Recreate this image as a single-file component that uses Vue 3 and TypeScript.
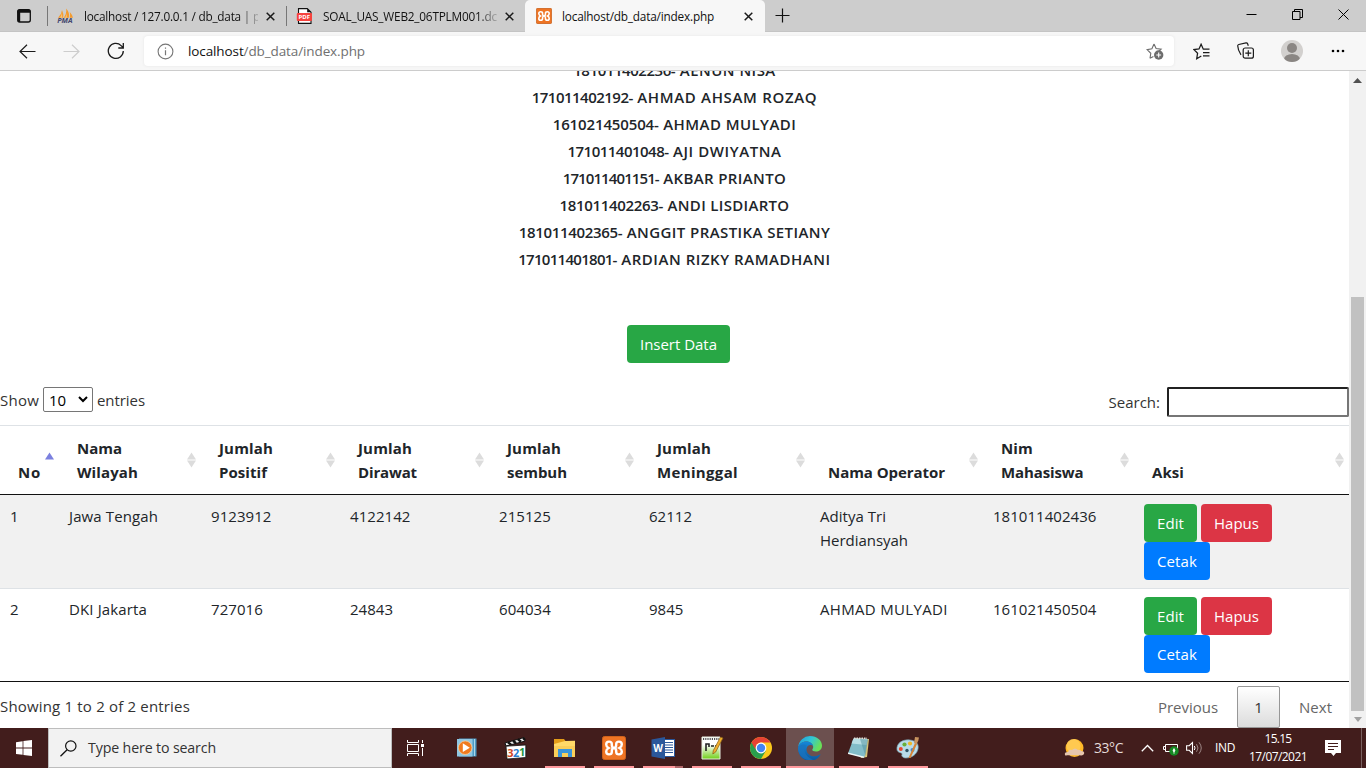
<script setup lang="ts">
import type { Directive } from 'vue'

interface Student { nim: string; nimWidth: number; name: string; nameWidth: number }
interface Column { lines: [string, number][]; width: number; asc?: boolean }
interface Cell { lines: [string, number][] }

// Tracks a single-line label so that it occupies the given advance width.
const vFit: Directive<HTMLElement, number> = {
  mounted(el, binding) {
    const count = (el.textContent ?? '').trim().length
    if (!count) return
    el.style.letterSpacing = '0px'
    const natural = el.getBoundingClientRect().width
    el.style.letterSpacing = `${((binding.value - natural) / count).toFixed(3)}px`
  },
}

const students: Student[] = [
  { nim: '181011402236-', nimWidth: 102, name: 'AENUN NISA', nameWidth: 96 },
  { nim: '171011402192-', nimWidth: 101, name: 'AHMAD AHSAM ROZAQ', nameWidth: 180 },
  { nim: '161021450504-', nimWidth: 106, name: 'AHMAD MULYADI', nameWidth: 133 },
  { nim: '171011401048-', nimWidth: 101, name: 'AJI DWIYATNA', nameWidth: 108.5 },
  { nim: '171011401151-', nimWidth: 96, name: 'AKBAR PRIANTO', nameWidth: 123 },
  { nim: '181011402263-', nimWidth: 103.5, name: 'ANDI LISDIARTO', nameWidth: 122 },
  { nim: '181011402365-', nimWidth: 103.5, name: 'ANGGIT PRASTIKA SETIANY', nameWidth: 203.5 },
  { nim: '171011401801-', nimWidth: 98.5, name: 'ARDIAN RIZKY RAMADHANI', nameWidth: 209.5 },
]

const columns: Column[] = [
  { lines: [['No', 23]], width: 59, asc: true },
  { lines: [['Nama', 45], ['Wilayah', 61]], width: 142 },
  { lines: [['Jumlah', 54], ['Positif', 48]], width: 139 },
  { lines: [['Jumlah', 54], ['Dirawat', 59]], width: 149 },
  { lines: [['Jumlah', 54], ['sembuh', 60]], width: 150 },
  { lines: [['Jumlah', 54], ['Meninggal', 81]], width: 171 },
  { lines: [['Nama Operator', 117]], width: 173 },
  { lines: [['Nim', 32], ['Mahasiswa', 82.5]], width: 151 },
  { lines: [['Aksi', 32]], width: 215 },
]

const rows: Cell[][] = [
  [
    { lines: [['1', 8.6]] },
    { lines: [['Jawa Tengah', 89]] },
    { lines: [['9123912', 60.4]] },
    { lines: [['4122142', 60.4]] },
    { lines: [['215125', 51.8]] },
    { lines: [['62112', 43.1]] },
    { lines: [['Aditya Tri', 66], ['Herdiansyah', 88]] },
    { lines: [['181011402436', 103.5]] },
  ],
  [
    { lines: [['2', 8.6]] },
    { lines: [['DKI Jakarta', 78]] },
    { lines: [['727016', 51.8]] },
    { lines: [['24843', 43.1]] },
    { lines: [['604034', 51.8]] },
    { lines: [['9845', 34.5]] },
    { lines: [['AHMAD MULYADI', 127.8]] },
    { lines: [['161021450504', 103.5]] },
  ],
]
</script>

<template>
  <div class="screen">
    <header class="tabs">
      <div class="tab-actions">
        <svg width="16" height="16" viewBox="0 0 16 16"><rect x="1.7" y="1.7" width="12.6" height="12.3" rx="2" fill="none" stroke="#111" stroke-width="1.3" /><path d="M1.5 3.2Q1.5 1.5 3.2 1.5H12.8Q14.5 1.5 14.5 3.2V4.8H1.5ZM2 4.5h2.2v9.500H2z" fill="#111" /></svg>
      </div>
      <div class="tab">
        <svg class="fav" width="17" height="16" viewBox="0 0 17 16"><path d="M1 9.8Q4.8 6 5 2Q7 6 6.2 9.8ZM6.6 9.8Q9.8 6 9.2 0.5Q13 5 12 9.8ZM12.7 9.8Q13.5 7 12.8 4Q15.5 7 16 9.8Z" fill="#f49b2e" /><path d="M3 9.8Q5.3 7 5 2L5.2 9.8ZM8 9.8Q10.5 6 9.2 .5L10 9.8Z" fill="#f9c275" /><text x="0.2" y="15.2" font-family="Open Sans, sans-serif" font-size="6.4" font-weight="700" font-style="italic" fill="#44486f" textLength="15.4" lengthAdjust="spacingAndGlyphs">PMA</text></svg>
        <div class="title fade"><span v-fit="166">localhost / 127.0.0.1 / db_data |</span><span>&nbsp;p</span></div>
        <svg class="x" width="9" height="9" viewBox="0 0 9 9"><path d="M.7.7l7.6 7.6M8.3.7L.7 8.3" stroke="#1a1a1a" stroke-width="1.5" /></svg>
      </div>
      <div class="tab">
        <svg class="fav" width="17" height="16" viewBox="0 0 17 16"><path d="M2.5 15.4V.6H11.3L15 4.2V15.4Z" fill="#fff" stroke="#111" stroke-width="1.1" /><path d="M11.2.5V4.3H15Z" fill="#111" /><rect x="0.8" y="5" width="15.2" height="8" rx="1" fill="#f6433e" /><text x="2.6" y="11.2" font-family="Open Sans, sans-serif" font-size="6" font-weight="700" fill="#fff" textLength="11.500">PDF</text></svg>
        <div class="title fade"><span v-fit="174">SOAL_UAS_WEB2_06TPLM001.dc</span></div>
        <svg class="x" width="9" height="9" viewBox="0 0 9 9"><path d="M.7.7l7.6 7.6M8.3.7L.7 8.3" stroke="#1a1a1a" stroke-width="1.5" /></svg>
      </div>
      <div class="tab active">
        <svg class="fav" width="16" height="16" viewBox="0 0 24 24"><rect x=".5" y=".5" width="23" height="23" rx="2" fill="#ee7424" stroke="#bd5411" /><path d="M9.800 9.500V8Q9.800 5.600 7 5.600Q4.200 5.600 4.200 8.400Q4.200 10.700 6.600 12Q4.200 13.300 4.200 15.600Q4.200 18.400 7 18.400Q9.800 18.400 9.800 16V14.500M14.200 9.500V8Q14.200 5.600 17 5.600Q19.800 5.600 19.800 8.400Q19.800 10.700 17.400 12Q19.800 13.300 19.800 15.600Q19.800 18.400 17 18.400Q14.200 18.400 14.200 16V14.500M9.800 9.200Q10 12 12 12T14.200 14.800M14.200 9.200Q14 12 12 12T9.800 14.800" fill="none" stroke="#fff" stroke-width="2.400" /></svg>
        <div class="title"><span v-fit="152">localhost/db_data/index.php</span></div>
        <svg class="x" width="9" height="9" viewBox="0 0 9 9"><path d="M.7.7l7.6 7.6M8.3.7L.7 8.3" stroke="#1a1a1a" stroke-width="1.5" /></svg>
      </div>
      <svg class="plus" width="15" height="15" viewBox="0 0 15 15"><path d="M7.5.5v14M.5 7.5h14" stroke="#111" stroke-width="1.2" /></svg>
      <div class="window-controls">
        <svg width="11" height="11" viewBox="0 0 11 11"><path d="M.5 5.5h10" stroke="#000" /></svg>
        <svg width="11" height="11" viewBox="0 0 11 11"><path d="M.5 2.5h7.5v8H.5zM2.5 2.5v-2h8v8H8" fill="none" stroke="#000" /></svg>
        <svg width="11" height="11" viewBox="0 0 11 11"><path d="M.5.5l10 10M10.5.5l-10 10" stroke="#000" /></svg>
      </div>
    </header>

    <nav class="toolbar">
      <div class="nav-icons">
        <svg width="17" height="15" viewBox="0 0 17 15"><path d="M16.5 7.5H1.2M8 .8L1 7.5l7 6.7" fill="none" stroke="#1b1b1b" stroke-width="1.2" /></svg>
        <svg width="17" height="15" viewBox="0 0 17 15"><path d="M.5 7.5h15.3M9 .8l7 6.7-7 6.7" fill="none" stroke="#cdcdcd" stroke-width="1.2" /></svg>
        <svg width="18" height="18" viewBox="0 0 18 18"><path d="M16.3 9a7.5 7.5 0 1 1-2.2-5.4l2 2M16.3 1v5h-5" fill="none" stroke="#1b1b1b" stroke-width="1.3" /></svg>
      </div>
      <div class="address">
        <svg width="17" height="17" viewBox="0 0 17 17"><circle cx="8.5" cy="8.5" r="7.4" fill="none" stroke="#777" stroke-width="1.1" /><path d="M8.5 7.3v5M8.5 4.4v1.4" stroke="#777" stroke-width="1.2" /></svg>
        <div class="url" v-fit="177"><b>localhost</b>/db_data/index.php</div>
        <svg class="fav-add" width="18" height="17" viewBox="0 0 18 17"><path d="M8 1l2.1 4.6 5 .6-3.2 3M4 15.3l.8-5L1.1 6.6l4.8-.9L8 1M4 15.3l3.4-1.8" fill="none" stroke="#6d6d6d" stroke-width="1.1" /><circle cx="12.7" cy="12" r="4.7" fill="#6d6d6d" /><path d="M12.7 9.6v4.8M10.3 12h4.8" stroke="#fff" stroke-width="1.1" /></svg>
      </div>
      <div class="tools">
        <svg width="18" height="17" viewBox="0 0 18 17"><path d="M16.5 6.2H10.3L8.1 1.2 6 5.9l-5 .7 3.6 3.6-.9 5.5 4.6-2.7M10 9.5h6.5M10 12.8h6.5" fill="none" stroke="#1b1b1b" stroke-width="1.25" /></svg>
        <svg width="18" height="18" viewBox="0 0 18 18"><rect x="6.2" y="6" width="10.2" height="10.2" rx="2" fill="none" stroke="#1b1b1b" stroke-width="1.2" /><path d="M11.3 8.2v6M8.3 11.2h6M4 12.8C1.3 9 .8 6.2.7 3.8Q.7 2.8 1.8 2.5L9 .9Q10.2.7 10.6 1.7L11.3 3.8" fill="none" stroke="#1b1b1b" stroke-width="1.2" /></svg>
        <svg width="22" height="22" viewBox="0 0 22 22"><defs><clipPath id="avatar"><circle cx="11" cy="11" r="11" /></clipPath></defs><g clip-path="url(#avatar)"><rect width="22" height="22" fill="#d2d0ce" /><circle cx="11" cy="8" r="5" fill="#8a8683" /><ellipse cx="11" cy="19.5" rx="8" ry="5.5" fill="#8a8683" /></g></svg>
        <svg width="14" height="4" viewBox="0 0 14 4"><circle cx="2" cy="2" r="1.3" /><circle cx="7" cy="2" r="1.3" /><circle cx="12" cy="2" r="1.3" /></svg>
      </div>
    </nav>

    <div class="viewport">
      <main class="page">
        <ul class="students">
          <li v-for="s in students" :key="s.nim"><span v-fit="s.nimWidth">{{ s.nim }}</span> <span v-fit="s.nameWidth">{{ s.name }}</span></li>
        </ul>
        <div class="insert"><button class="btn green"><span v-fit="77">Insert Data</span></button></div>

        <div class="controls">
          <label class="length">
            <span v-fit="39">Show</span>
            <span class="select"><span v-fit="17">10</span><svg width="10" height="7" viewBox="0 0 10 7"><path d="M1 1l4 4 4-4" fill="none" stroke="#000" stroke-width="2" /></svg></span>
            <span v-fit="48">entries</span>
          </label>
          <label class="filter"><span v-fit="51.5">Search:</span><input type="text" /></label>
        </div>

        <table>
          <colgroup><col v-for="(c, i) in columns" :key="i" :style="{ width: c.width + 'px' }" /></colgroup>
          <thead>
            <tr>
              <th v-for="(c, i) in columns" :key="i">
                <div class="head">
                  <div><div v-for="(l, j) in c.lines" :key="j" class="line"><span v-fit="l[1]">{{ l[0] }}</span></div></div>
                  <svg class="sort" width="9" height="16" viewBox="0 0 9 16">
                    <path d="M4.5 0.5L9 7.5H0Z" :fill="c.asc ? '#7b80df' : '#dcdcdc'" />
                    <path v-if="!c.asc" d="M4.5 15.5L0 8.5H9Z" fill="#dcdcdc" />
                  </svg>
                </div>
              </th>
            </tr>
          </thead>
          <tbody>
            <tr v-for="(r, i) in rows" :key="i">
              <td v-for="(c, j) in r" :key="j">
                <div v-for="(l, k) in c.lines" :key="k" class="line"><span v-fit="l[1]">{{ l[0] }}</span></div>
              </td>
              <td>
                <div class="actions">
                  <button class="btn green"><span v-fit="27">Edit</span></button>
                  <button class="btn red"><span v-fit="45">Hapus</span></button>
                  <button class="btn blue"><span v-fit="40">Cetak</span></button>
                </div>
              </td>
            </tr>
          </tbody>
        </table>

        <footer class="foot">
          <span class="info" v-fit="190">Showing 1 to 2 of 2 entries</span>
          <div class="pager">
            <a><span v-fit="60">Previous</span></a><a class="current">1</a><a><span v-fit="33">Next</span></a>
          </div>
        </footer>
      </main>
      <aside class="scrollbar">
        <svg width="9" height="5" viewBox="0 0 9 5"><path d="M4.5 0L9 5H0Z" fill="#505050" /></svg>
        <div class="thumb"></div>
        <svg width="8" height="5" viewBox="0 0 8 5"><path d="M4 5L0 0H8Z" fill="#a0a0a0" /></svg>
      </aside>
    </div>

    <div class="taskbar">
      <div class="start"><svg width="16" height="16" viewBox="0 0 16 16"><path d="M0 2.2L6.6 1.2V7.5H0ZM7.4 1.1L16 0V7.5H7.4ZM0 8.4H6.6V14.8L0 13.9ZM7.4 8.4H16V16L7.4 14.9Z" fill="#fff" /></svg></div>
      <div class="searchbox">
        <svg width="17" height="17" viewBox="0 0 17 17"><circle cx="10.8" cy="6" r="5.2" fill="none" stroke="#111" stroke-width="1.2" /><path d="M7.1 9.7L.5 16.3" stroke="#111" stroke-width="1.3" /></svg>
        <span v-fit="128">Type here to search</span>
      </div>
      <div class="apps">
        <div class="app task-view"><svg width="18" height="16" viewBox="0 0 18 16"><path d="M.5 0v2.500h11V0M.5 16v-2.500h11V16M.5 4.500h11v7H.5zM15.500 0v3M15.500 8v8" fill="none" stroke="#fff" /><rect x="14" y="4" width="3" height="3" fill="#fff" /></svg></div>
        <div class="app"><svg width="22" height="22" viewBox="0 0 22 22"><path d="M3 1.5h17.5v18H3z" fill="#4e9bc4" /><path d="M1 2h15.5v17.5H1z" fill="#8fc7e3" /><path d="M18.5 2v17" stroke="#a9d7ea" /><circle cx="9.2" cy="10.7" r="6.8" fill="#f07a1e" stroke="#fbd0a0" stroke-width=".8" /><path d="M6.8 6.3v8.8l7-4.4z" fill="#fff" /></svg></div>
        <div class="app"><svg width="24" height="24" viewBox="0 0 24 24"><path d="M1 7L20 1.5l1 3.6L2 10z" fill="#eee" stroke="#111" stroke-width="1" /><path d="M4 6.2l3 2.4M9 4.8l3 2.4M14 3.3l3 2.4M19 2l2 2" stroke="#111" stroke-width="2.4" /><path d="M2 10.200L21.8 9v12.5L3 23z" fill="#fff" stroke="#111" stroke-width=".8" /><g font-family="Open Sans, sans-serif" font-size="11" font-weight="700"><text x="3.2" y="20.8" fill="#d24824">3</text><text x="9.1" y="20.6" fill="#287fd0">2</text><text x="15" y="20.3" fill="#249641">1</text></g></svg></div>
        <div class="app open"><svg width="24" height="22" viewBox="0 0 24 22"><path d="M1 2h10l1.5 2H22v15H1z" fill="#e39d19" /><path d="M1 7l11-3 10-.2V20H1z" fill="#ffd968" /><path d="M1 9h21v11H1z" fill="#f9ce59" /><path d="M5 20v-8h14v8h-4v-4H9v4z" fill="#3a95da" /></svg></div>
        <div class="app open"><svg width="24" height="24" viewBox="0 0 24 24"><rect x=".5" y=".5" width="23" height="23" rx="2" fill="#ee7424" stroke="#cf621b" /><path d="M9.800 9.500V8Q9.800 5.600 7 5.600Q4.200 5.600 4.200 8.400Q4.200 10.700 6.600 12Q4.200 13.300 4.200 15.600Q4.200 18.400 7 18.400Q9.800 18.400 9.800 16V14.500M14.200 9.500V8Q14.200 5.600 17 5.600Q19.800 5.600 19.800 8.400Q19.800 10.700 17.400 12Q19.800 13.300 19.800 15.600Q19.800 18.400 17 18.400Q14.200 18.400 14.200 16V14.500M9.800 9.200Q10 12 12 12T14.200 14.800M14.200 9.200Q14 12 12 12T9.800 14.800" fill="none" stroke="#fff" stroke-width="2.400" /></svg></div>
        <div class="app open grouped"><svg width="24" height="22" viewBox="0 0 24 22"><rect x="12" y="2.5" width="11.5" height="17" fill="#fff" stroke="#2b579a" /><path d="M14 5.5h8M14 8h8M14 10.5h8M14 13h8M14 15.5h8" stroke="#2b579a" stroke-width="1.1" /><path d="M.5 2.5L14 0v22L.5 19.5z" fill="#2b579a" /><text x="2.2" y="15" font-family="Open Sans, sans-serif" font-size="10" font-weight="700" fill="#fff">W</text></svg></div>
        <div class="app open"><svg width="24" height="24" viewBox="0 0 24 24"><defs><linearGradient id="npp" x2="0" y2="1"><stop offset=".35" stop-color="#fff" /><stop offset="1" stop-color="#70cf18" /></linearGradient></defs><path d="M2 1h18v22H2z" fill="url(#npp)" stroke="#e8efe0" /><path d="M3 3h16" stroke="#555" stroke-width="2" stroke-dasharray="1.2 1" /><path d="M6 15V8h3v3M11 10h3M15 10h2" fill="none" stroke="#222" stroke-width="1.6" /><path d="M20.5 1l2.5 1-7.3 14-2.9 2 .5-3.5z" fill="#f1ae2c" stroke="#815b19" stroke-width=".7" /></svg></div>
        <div class="app open"><svg width="22" height="22" viewBox="0 0 22 22"><circle cx="11" cy="11" r="11" fill="#fbc91c" /><path d="M1.500 5.500A11 11 0 0 0 11 22l4.800-8.200L11 11z" fill="#299f4d" /><path d="M1.500 5.500A11 11 0 0 1 20.500 5.500H11A5.500 5.500 0 0 0 6.200 8.300L5.500 12.400z" fill="#e64234" /><circle cx="11" cy="11" r="5.400" fill="#fff" /><circle cx="11" cy="11" r="4.200" fill="#4285f4" /></svg></div>
        <div class="app open active"><svg width="24" height="24" viewBox="0 0 24 24"><defs><linearGradient id="eg" x1="0" x2="1" y2=".4"><stop stop-color="#209bd9" /><stop offset=".55" stop-color="#31c6d7" /><stop offset="1" stop-color="#69df58" /></linearGradient><linearGradient id="eb" x2="0" y2="1"><stop stop-color="#1588d8" /><stop offset="1" stop-color="#0c579e" /></linearGradient></defs><path d="M.2 11A12 12 0 0 1 12 0c7 0 12 4.5 12 9.5 0 4-3 6-6.1 6-2.3 0-3.6-.8-3.6-1.7 0-.7.9-1.1.9-2.8C15.200 8 12 5.500 8.500 5.500 4 5.500 1.200 8 .2 11z" fill="url(#eg)" /><path d="M.1 12C.5 8 4 5.500 8.500 5.500c3.300 0 6.200 2 6.600 4.500-.7-1-1.900-1.200-3.100-1-3 .5-4 3.500-3.300 6 .9 3.500 4.500 5.800 8.300 5.300 2-.2 3.700-1 4.900-1.700.5-.2.700.1.500.5A12 12 0 0 1 .1 12z" fill="url(#eb)" /><path d="M8.700 9.500C6.500 11 5.700 15 8 18.500c1.800 2.700 4.500 4.300 7 5C7 26 .1 19.500.1 12 1.500 9 5.500 7.500 8.700 9.500z" fill="#1b73bd" opacity=".7" /></svg></div>
        <div class="app open"><svg width="24" height="24" viewBox="0 0 24 24"><path d="M7 2L22 3l-2 18-6 1z" fill="#d8c47a" /><path d="M6.500 2.500L20.500 3 17.500 21.500 1 17.500z" fill="#82bdc9" /><path d="M6.500 2.500L20.500 3l-1 6-15-1.500z" fill="#b9dfe5" /><path d="M1 16.500l16 4-.3 1.500L1 18z" fill="#eef7f8" /><path d="M13 3l5.500 17L21 3.500z" fill="#4f919e" opacity=".5" /><path d="M7 2.300h13" stroke="#ddd" stroke-dasharray="1.500 1" stroke-width="1.500" /></svg></div>
        <div class="app open"><svg width="24" height="24" viewBox="0 0 24 24"><path d="M1 14C0 7 7 3 14 4c7 .8 9 5 8 9-1 5-6 9-12 9-3 0-5-2-4-3.500C6.500 16 2 17.500 1 14z" fill="#b9dcea" stroke="#779dac" stroke-width=".7" /><circle cx="4.800" cy="13" r="2" fill="#e84730" /><circle cx="8.500" cy="8.500" r="2.100" fill="#68af3a" /><circle cx="14" cy="7.500" r="2.100" fill="#eeb629" /><circle cx="11" cy="14.500" r="1.700" fill="#2d5365" /><circle cx="16.500" cy="14" r="2" fill="#4285ce" /><path d="M12.500 22L19 7l2 1-6.500 14z" fill="#d68437" /><path d="M18 7L19 1l4 .5-.7 3L20.500 8.500z" fill="#c8935f" /></svg></div>
      </div>
      <div class="tray">
        <svg class="weather" width="21" height="21" viewBox="0 0 21 21"><circle cx="10.500" cy="10" r="9" fill="#ffb927" /><circle cx="9.500" cy="8" r="7" fill="#ffd062" opacity=".7" /><path d="M1 17Q0 14 4 14 5 11 8 12q3-3 6 0 2-1 3 1 4 0 3 3-1 2-4 1.300H3Q1.500 18 1 17z" fill="#e6c6ad" /></svg>
        <span class="temp" v-fit="29">33°C</span>
        <svg class="chev" width="13" height="8" viewBox="0 0 13 8"><path d="M.8 7.200L6.500 1.500l5.700 5.700" fill="none" stroke="#fff" stroke-width="1.300" /></svg>
        <svg class="battery" width="17" height="13" viewBox="0 0 17 13"><path d="M2.500 1.500h12v7h-12zM2.500 3.500h-2v3h2" fill="none" stroke="#fff" /><circle cx="11" cy="8" r="4.700" fill="#158923" /><path d="M11 5.500q2 2 0 3.800-2-1.800 0-3.800zM11 9v2" fill="#fff" stroke="#fff" stroke-width=".6" /></svg>
        <svg class="sound" width="17" height="14" viewBox="0 0 17 14"><path d="M.6 4.700h2.600l3.300-3.200v11L3.200 9.300H.6z" fill="none" stroke="#fff" stroke-width="1.100" /><path d="M8.300 5q1.500 2 0 4" fill="none" stroke="#fff" /><path d="M10.500 3.200q3 3.800 0 7.600M13 1.300q4.500 5.700 0 11.400" fill="none" stroke="#9d8786" /></svg>
        <span class="lang" v-fit="20">IND</span>
        <div class="clock"><span v-fit="27">15.15</span><span v-fit="58">17/07/2021</span></div>
        <svg class="notice" width="16" height="16" viewBox="0 0 16 16"><path d="M0 0h16v13h-5l-2.500 3-2.500-3H0z" fill="#fff" /><path d="M3 3.500h10M3 6.500h10M3 9.500h6" stroke="#431c1b" /></svg>
        <div class="peek"></div>
      </div>
    </div>
  </div>
</template>

<style>
html, body { overflow: hidden; background: #fff; }
</style>

<style scoped>
* { box-sizing: border-box; }
.screen { display: flex; flex-direction: column; width: 1366px; height: 768px; overflow: hidden; font: 400 15px/24px "Open Sans", "Noto Sans", sans-serif; color: #212529; white-space: nowrap; }
.screen span { display: inline-block; }
.screen svg { display: block; flex: none; }
.tabs { flex: none; display: flex; height: 32px; background: #cdcdcd; border-bottom: 1px solid #c4c4c4; font-size: 11.8px; line-height: 16px; color: #222; }
.tab-actions { width: 47px; padding: 8px 0 0 16px; }
.tab { position: relative; display: flex; align-items: center; width: 239px; height: 32px; padding: 0 11px 0 10px; }
.tab::before { content: ""; position: absolute; left: 0; top: 6px; width: 1px; height: 20px; background: #777; }
.tab.active { width: 240px; padding: 0 12px 0 11px; background: #f7f7f7; border-radius: 5px 5px 0 0; }
.tab.active::before { display: none; }
.tab .title { flex: 1; height: 16px; margin-left: 10px; overflow: hidden; color: #111; }
.tab .title.fade { flex: none; width: 174px; -webkit-mask-image: linear-gradient(90deg, #000 155px, transparent 178px); mask-image: linear-gradient(90deg, #000 155px, transparent 178px); }
.tab .x { margin-left: auto; }
.plus { margin: 8px 0 0 10px; }
.window-controls { display: flex; gap: 35px; margin-left: auto; padding: 9px 17px 0 0; }
.toolbar { flex: none; display: flex; align-items: center; height: 39px; background: #f7f7f7; border-bottom: 1px solid #ccc; }
.nav-icons { display: flex; align-items: center; gap: 27px; width: 144px; padding-left: 19px; }
.address { display: flex; align-items: center; width: 1030px; height: 30px; padding: 0 10px 0 13px; background: #fff; border-radius: 4px; box-shadow: 0 0 3px #e4e4e4; }
.url { margin-left: 14px; font-size: 13.5px; line-height: 20px; color: #707070; }
.url b { font-weight: 400; color: #111; }
.fav-add { margin-left: auto; }
.tools { display: flex; align-items: center; margin-left: 19px; }
.tools svg:nth-child(2) { margin-left: 26px; }
.tools svg:nth-child(3) { margin-left: 26px; }
.tools svg:nth-child(4) { margin-left: 28px; }
.viewport { flex: none; display: flex; height: 657px; background: #fff; }
.page { width: 1349px; height: 657px; overflow: hidden; }
.students { margin: -13px 0 0; padding: 0; height: 267px; list-style: none; font-weight: 600; font-size: 15px; }
.students li { display: flex; justify-content: center; gap: 4.500px; height: 27px; line-height: 25px; }
.insert { display: flex; justify-content: center; margin-left: 8px; }
.btn { height: 38px; padding: 0 13px; border: 0; border-radius: 4px; color: #fff; font: inherit; line-height: 38px; text-align: left; white-space: nowrap; }
.green { background: #28a745; }
.red { background: #dc3545; }
.blue { background: #007bff; }
.controls { display: flex; justify-content: space-between; align-items: flex-start; height: 62px; padding-top: 24px; color: #333; }
.length { display: flex; gap: 4px; align-items: center; height: 25px; }
.screen .select { display: flex; align-items: center; justify-content: space-between; width: 50px; height: 25px; padding: 0 4px 0 5px; border: 1px solid #767676; border-radius: 2px; color: #000; }
.filter { display: flex; align-items: center; gap: 7px; }
.filter input { width: 182px; height: 30px; border: 2px inset #767676; border-radius: 2px; background: #fff; }
table { width: 1349px; table-layout: fixed; border-collapse: separate; border-spacing: 0; border-top: 1px solid #dee2e6; border-bottom: 1px solid #111; }
th { height: 69px; padding: 9px 8px 10px 18px; border-bottom: 1px solid #111; vertical-align: bottom; text-align: left; font-weight: 700; }
.head { position: relative; display: flex; align-items: flex-end; height: 48px; }
.sort { position: absolute; right: -3px; top: 16px; }
.line { height: 24px; }
td { height: 93px; padding: 8px 10px; border-top: 1px solid #dee2e6; vertical-align: top; }
tbody tr:first-child td { background: #f1f1f1; border-top-color: #f1f1f1; }
.actions { display: flex; flex-wrap: wrap; column-gap: 4px; width: 130px; height: 76px; }
.foot { display: flex; justify-content: space-between; height: 46px; color: #333; }
.info { padding-top: 12px; }
.pager { display: flex; padding-top: 4px; color: #666; }
.pager a { height: 42px; padding: 9px 17px 0 18px; }
.pager .current { width: 43px; margin: 0 1px 0 2px; padding: 8px 0 0; border: 1px solid #979797; border-radius: 2px; text-align: center; color: #333; background: linear-gradient(#fff, #dcdcdc); }
.scrollbar { display: flex; flex-direction: column; align-items: center; width: 17px; height: 657px; padding: 7px 0 6px; background: #f1f1f1; }
.thumb { width: 13px; height: 414px; margin: 214px 0 auto; background: #c1c1c1; }
.taskbar { flex: none; display: flex; height: 40px; background: #421d1c; color: #fff; }
.start { display: flex; align-items: center; width: 48px; padding-left: 16px; }
.searchbox { display: flex; align-items: center; gap: 11px; width: 344px; padding-left: 11px; background: #f2f2f2; border: 1px solid #bdbdbd; color: #333; font-size: 14.2px; }
.apps { display: flex; gap: 1px; }
.app { position: relative; display: flex; align-items: center; justify-content: center; width: 48px; height: 40px; }
.task-view { margin-right: 2px; }
.app.open::after { content: ""; position: absolute; left: 4px; right: 4px; bottom: 0; height: 2px; background: #ff999d; }
.app.grouped::after { background: linear-gradient(90deg, #ff999d 32px, #b0686b 32px); }
.app.active { background: #6c504f; }
.app.active::after { left: 0; right: 0; }
.tray { display: flex; align-items: center; margin-left: auto; width: 303px; font-size: 12px; }
.weather { margin-left: 1px; }
.temp { margin-left: 9px; font-size: 14px; color: #e5dcdb; }
.chev { margin-left: 18px; }
.battery { margin-left: 9px; margin-top: 2px; }
.sound { margin-left: 6px; }
.lang { margin-left: 12px; }
.clock { display: flex; flex-direction: column; align-items: center; margin-left: 14px; line-height: 18px; }
.notice { margin-left: 18px; }
.peek { width: 1px; height: 40px; margin-left: auto; margin-right: 4px; background: #79605f; }
</style>
